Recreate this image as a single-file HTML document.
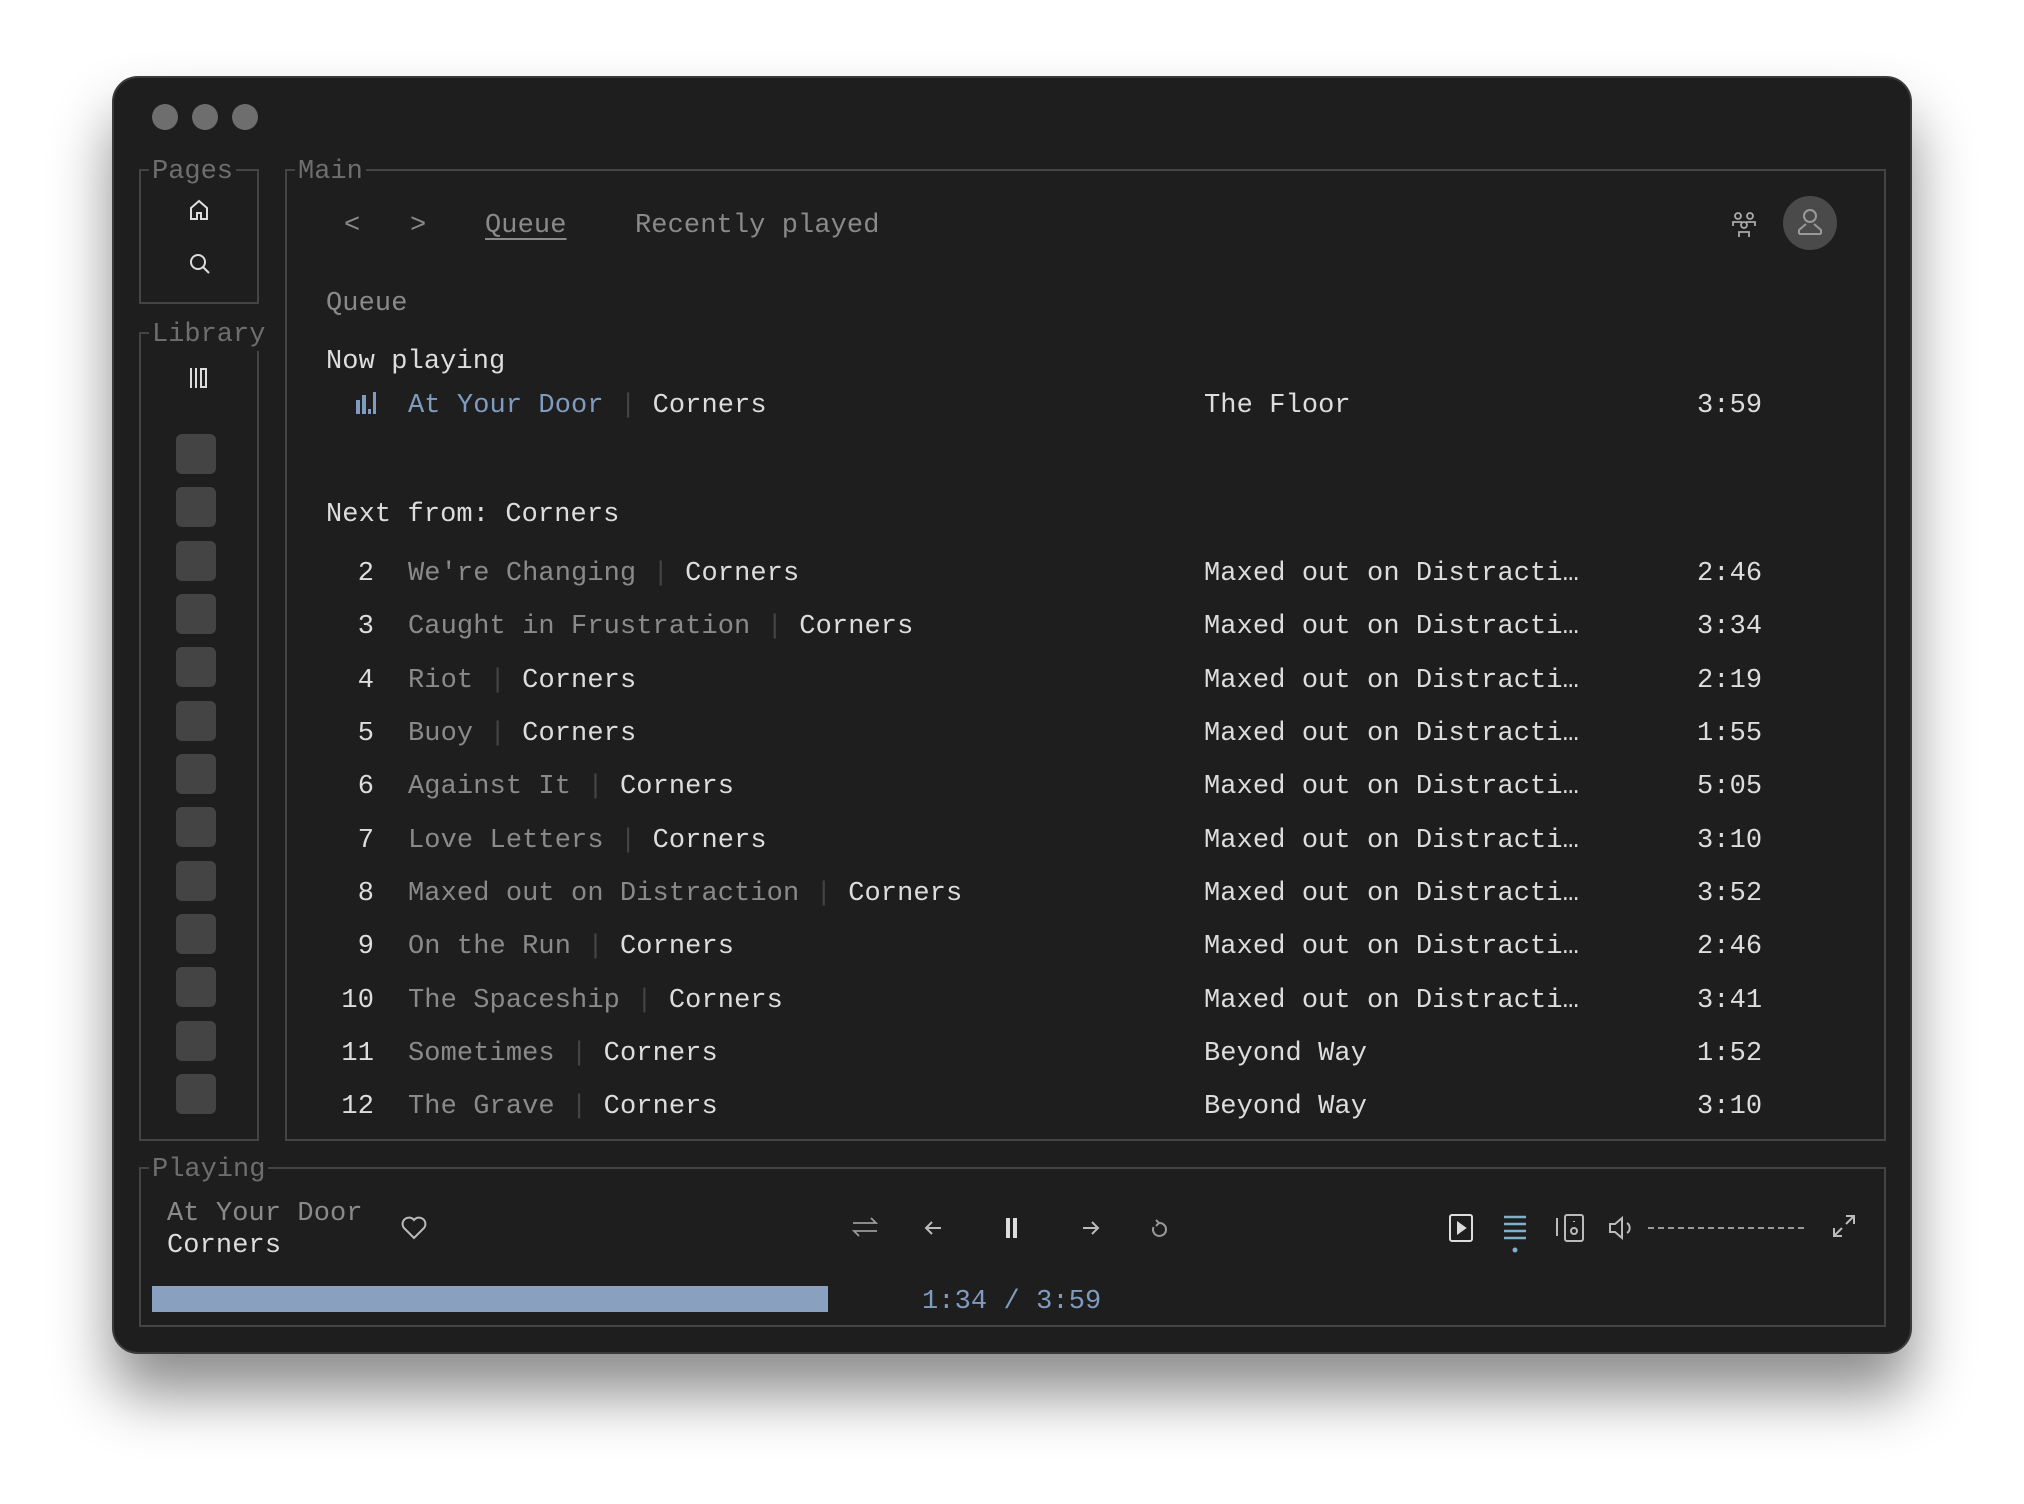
<!DOCTYPE html>
<html><head><meta charset="utf-8"><style>
*{margin:0;padding:0;box-sizing:border-box}
body{width:2024px;height:1504px;background:#fff;position:relative;overflow:hidden;font-family:"Liberation Mono",monospace;font-size:27px;color:#ddd}
.win{position:absolute;left:112px;top:76px;width:1800px;height:1278px;background:#1e1e1e;border-radius:26px;border:2px solid #3a3a3a;box-shadow:0 40px 60px rgba(0,0,0,.45)}
.dot{position:absolute;top:104px;width:26px;height:26px;border-radius:50%;background:#6e6e6e}
.box{position:absolute;border:2px solid #444}
.lbl{position:absolute;background:#1e1e1e;color:#6e6e6e;padding:0 3px;line-height:32px;top:-15px;left:8px}
.t{position:absolute;line-height:32px;white-space:pre;transform:translateY(3px);letter-spacing:0.1px}
.d{color:#8a8a8a}.s{color:#444}.b{color:#7f9cc0}
.sq{position:absolute;left:176px;width:40px;height:40px;border-radius:6px;background:#444}
svg{position:absolute;overflow:visible}
</style></head><body>
<div class="win"></div>
<div class="dot" style="left:152px"></div><div class="dot" style="left:192px"></div><div class="dot" style="left:232px"></div>

<div class="box" style="left:139px;top:169px;width:120px;height:135px"><div class="lbl">Pages</div></div>
<div class="box" style="left:139px;top:332px;width:120px;height:809px"><div class="lbl">Library</div></div>
<div class="box" style="left:285px;top:169px;width:1601px;height:972px"><div class="lbl">Main</div></div>
<div class="box" style="left:139px;top:1167px;width:1747px;height:160px"><div class="lbl">Playing</div></div>

<svg style="left:189px;top:199px" width="20" height="22" viewBox="0 0 20 22" fill="none" stroke="#ddd" stroke-width="2"><path d="M2 9 L10 2 L18 9 V20 H12 V14 H8 V20 H2 Z"/></svg>
<svg style="left:189px;top:253px" width="22" height="22" viewBox="0 0 22 22" fill="none" stroke="#ddd" stroke-width="2"><circle cx="9" cy="9" r="7"/><path d="M14 14 L20 20"/></svg>
<svg style="left:189px;top:367px" width="22" height="22" viewBox="0 0 22 22" fill="none" stroke="#ddd" stroke-width="2"><path d="M2 1V21M7 1V21M12 2H17V20H12Z"/></svg>
<div class="sq" style="top:434px"></div><div class="sq" style="top:487px"></div><div class="sq" style="top:541px"></div><div class="sq" style="top:594px"></div><div class="sq" style="top:647px"></div><div class="sq" style="top:701px"></div><div class="sq" style="top:754px"></div><div class="sq" style="top:807px"></div><div class="sq" style="top:861px"></div><div class="sq" style="top:914px"></div><div class="sq" style="top:967px"></div><div class="sq" style="top:1021px"></div><div class="sq" style="top:1074px"></div>

<div class="t d" style="left:344px;top:207px">&lt;</div>
<div class="t d" style="left:410px;top:207px">&gt;</div>
<div class="t d" style="left:485px;top:207px;text-decoration:underline;text-underline-offset:6px">Queue</div>
<div class="t d" style="left:635px;top:207px">Recently played</div>
<svg style="left:1730px;top:210px" width="28" height="28" viewBox="0 0 28 28" fill="none" stroke="#aaa" stroke-width="1.8"><circle cx="8" cy="6" r="3"/><circle cx="20" cy="6" r="3"/><circle cx="14" cy="15" r="3"/><path d="M3 16 V12 H12 M25 16 V12 H16 M9 27 V22 H19 V27"/></svg>
<div style="position:absolute;left:1783px;top:196px;width:54px;height:54px;border-radius:50%;background:#4a4a4a"></div>
<svg style="left:1797px;top:208px" width="26" height="28" viewBox="0 0 26 28" fill="none" stroke="#999" stroke-width="2"><circle cx="13" cy="8" r="6"/><path d="M2 26 V22 L9 16 M24 26 V22 L17 16 M2 26 H24"/></svg>

<div class="t d" style="left:326px;top:285px">Queue</div>
<div class="t" style="left:326px;top:343px">Now playing</div>
<svg style="left:356px;top:392px" width="22" height="22" viewBox="0 0 22 22" fill="#7f9cc0"><rect x="0" y="8" width="4" height="14"/><rect x="6" y="3" width="4" height="19"/><rect x="12" y="17" width="3" height="5"/><rect x="17" y="0" width="3" height="22"/></svg>
<div class="t" style="left:408px;top:387px"><span class="b">At Your Door</span> <span class="s">|</span> Corners</div>
<div class="t" style="left:1204px;top:387px">The Floor</div>
<div class="t" style="left:1697px;top:387px">3:59</div>
<div class="t" style="left:326px;top:496px">Next from: Corners</div>

<div class="t" style="left:340px;top:555px;width:34px;text-align:right">2</div><div class="t" style="left:408px;top:555px"><span class="d">We're Changing</span> <span class="s">|</span> Corners</div><div class="t" style="left:1204px;top:555px">Maxed out on Distracti…</div><div class="t" style="left:1697px;top:555px">2:46</div>
<div class="t" style="left:340px;top:608px;width:34px;text-align:right">3</div><div class="t" style="left:408px;top:608px"><span class="d">Caught in Frustration</span> <span class="s">|</span> Corners</div><div class="t" style="left:1204px;top:608px">Maxed out on Distracti…</div><div class="t" style="left:1697px;top:608px">3:34</div>
<div class="t" style="left:340px;top:662px;width:34px;text-align:right">4</div><div class="t" style="left:408px;top:662px"><span class="d">Riot</span> <span class="s">|</span> Corners</div><div class="t" style="left:1204px;top:662px">Maxed out on Distracti…</div><div class="t" style="left:1697px;top:662px">2:19</div>
<div class="t" style="left:340px;top:715px;width:34px;text-align:right">5</div><div class="t" style="left:408px;top:715px"><span class="d">Buoy</span> <span class="s">|</span> Corners</div><div class="t" style="left:1204px;top:715px">Maxed out on Distracti…</div><div class="t" style="left:1697px;top:715px">1:55</div>
<div class="t" style="left:340px;top:768px;width:34px;text-align:right">6</div><div class="t" style="left:408px;top:768px"><span class="d">Against It</span> <span class="s">|</span> Corners</div><div class="t" style="left:1204px;top:768px">Maxed out on Distracti…</div><div class="t" style="left:1697px;top:768px">5:05</div>
<div class="t" style="left:340px;top:822px;width:34px;text-align:right">7</div><div class="t" style="left:408px;top:822px"><span class="d">Love Letters</span> <span class="s">|</span> Corners</div><div class="t" style="left:1204px;top:822px">Maxed out on Distracti…</div><div class="t" style="left:1697px;top:822px">3:10</div>
<div class="t" style="left:340px;top:875px;width:34px;text-align:right">8</div><div class="t" style="left:408px;top:875px"><span class="d">Maxed out on Distraction</span> <span class="s">|</span> Corners</div><div class="t" style="left:1204px;top:875px">Maxed out on Distracti…</div><div class="t" style="left:1697px;top:875px">3:52</div>
<div class="t" style="left:340px;top:928px;width:34px;text-align:right">9</div><div class="t" style="left:408px;top:928px"><span class="d">On the Run</span> <span class="s">|</span> Corners</div><div class="t" style="left:1204px;top:928px">Maxed out on Distracti…</div><div class="t" style="left:1697px;top:928px">2:46</div>
<div class="t" style="left:330px;top:982px;width:44px;text-align:right">10</div><div class="t" style="left:408px;top:982px"><span class="d">The Spaceship</span> <span class="s">|</span> Corners</div><div class="t" style="left:1204px;top:982px">Maxed out on Distracti…</div><div class="t" style="left:1697px;top:982px">3:41</div>
<div class="t" style="left:330px;top:1035px;width:44px;text-align:right">11</div><div class="t" style="left:408px;top:1035px"><span class="d">Sometimes</span> <span class="s">|</span> Corners</div><div class="t" style="left:1204px;top:1035px">Beyond Way</div><div class="t" style="left:1697px;top:1035px">1:52</div>
<div class="t" style="left:330px;top:1088px;width:44px;text-align:right">12</div><div class="t" style="left:408px;top:1088px"><span class="d">The Grave</span> <span class="s">|</span> Corners</div><div class="t" style="left:1204px;top:1088px">Beyond Way</div><div class="t" style="left:1697px;top:1088px">3:10</div>

<div class="t d" style="left:167px;top:1195px">At Your Door</div>
<div class="t" style="left:167px;top:1227px">Corners</div>
<svg style="left:401px;top:1216px" width="26" height="24" viewBox="0 0 26 24" fill="none" stroke="#bbb" stroke-width="2"><path d="M13 22 L3 12 A5.5 5.5 0 0 1 13 4 A5.5 5.5 0 0 1 23 12 Z"/></svg>
<svg style="left:852px;top:1216px" width="26" height="22" viewBox="0 0 26 22" fill="none" stroke="#999" stroke-width="1.8"><path d="M1 7 H24 L19 2 M25 15 H2 L7 20"/></svg>
<svg style="left:924px;top:1219px" width="18" height="18" viewBox="0 0 18 18" fill="none" stroke="#bbb" stroke-width="2"><path d="M17 9 H2 M8 3 L2 9 L8 15"/></svg>
<svg style="left:1005px;top:1217px" width="14" height="22" viewBox="0 0 14 22" fill="#ddd"><rect x="1" y="1" width="4" height="20"/><rect x="8" y="1" width="4" height="20"/></svg>
<svg style="left:1082px;top:1219px" width="18" height="18" viewBox="0 0 18 18" fill="none" stroke="#bbb" stroke-width="2"><path d="M1 9 H16 M10 3 L16 9 L10 15"/></svg>
<svg style="left:1150px;top:1219px" width="18" height="20" viewBox="0 0 18 20" fill="none" stroke="#999" stroke-width="2"><path d="M9 4 A6.5 6.5 0 1 1 3.5 8 M6 1 L9 4 L6 7"/></svg>
<svg style="left:1449px;top:1214px" width="24" height="28" viewBox="0 0 24 28" fill="none" stroke="#ddd" stroke-width="2"><rect x="1" y="1" width="22" height="26" rx="2"/><path d="M9 9 L16 14 L9 19 Z" fill="#ddd"/></svg>
<svg style="left:1503px;top:1214px" width="24" height="40" viewBox="0 0 24 40" fill="none" stroke="#7fb0cc" stroke-width="2.5"><path d="M1 3 H23 M1 10 H23 M1 17 H23 M1 24 H23"/><circle cx="12" cy="36" r="2.5" fill="#7fb0cc" stroke="none"/></svg>
<svg style="left:1556px;top:1214px" width="28" height="28" viewBox="0 0 28 28" fill="none" stroke="#bbb" stroke-width="2"><rect x="9" y="1" width="18" height="26" rx="2"/><circle cx="18" cy="17" r="3"/><path d="M1 4 V22 M18 7 V8"/></svg>
<svg style="left:1608px;top:1215px" width="26" height="26" viewBox="0 0 26 26" fill="none" stroke="#bbb" stroke-width="2"><path d="M2 9 H7 L14 3 V23 L7 17 H2 Z M19 8 A6 6 0 0 1 19 18"/></svg>
<div style="position:absolute;left:1648px;top:1227px;width:156px;border-top:2px dashed #999"></div>
<svg style="left:1832px;top:1214px" width="24" height="24" viewBox="0 0 24 24" fill="none" stroke="#bbb" stroke-width="2"><path d="M14 2 H22 V10 M22 2 L14 10 M10 22 H2 V14 M2 22 L10 14"/></svg>
<div style="position:absolute;left:152px;top:1286px;width:676px;height:26px;background:#8aa0bf"></div>
<div class="t b" style="left:922px;top:1283px">1:34 / 3:59</div>
</body></html>
